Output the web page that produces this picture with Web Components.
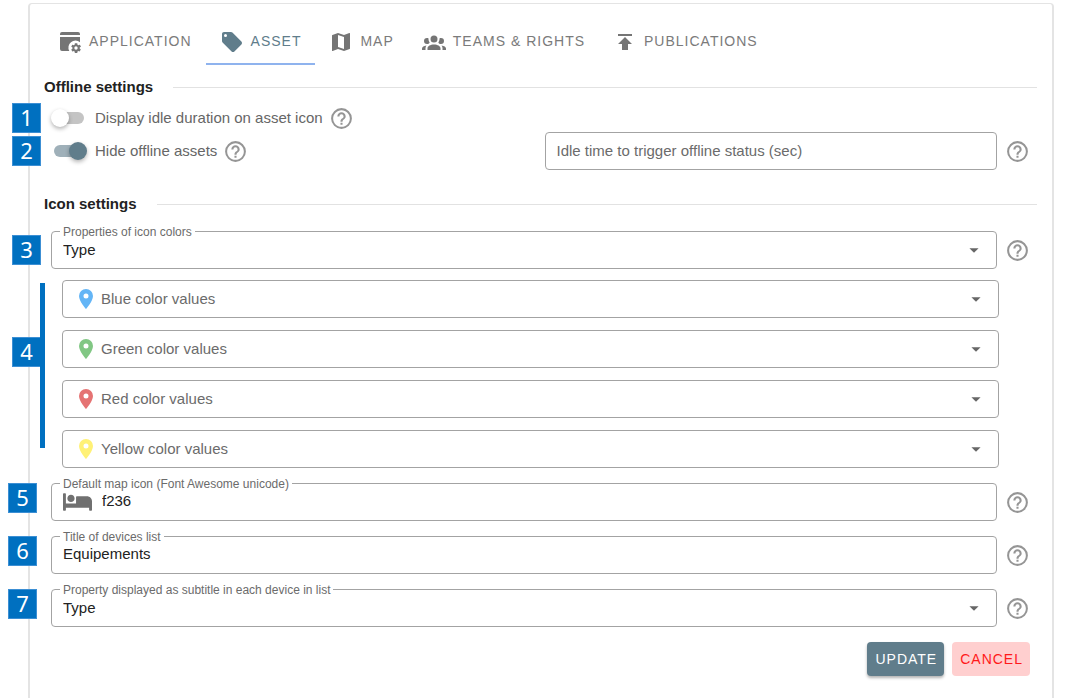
<!DOCTYPE html>
<html lang="en">
<head>
<meta charset="utf-8">
<meta name="viewport" content="width=device-width, initial-scale=1">
<title>Offline settings</title>
<style>
    body { margin: 0; background: #fff; font-family: "Liberation Sans", Arial, sans-serif; font-size: 15px; line-height: 20px; color: #222; }
</style>
</head>
<body>

<settings-card>
    <tab-bar>
        <tab-item icon="application">APPLICATION</tab-item>
        <tab-item icon="tag" selected>ASSET</tab-item>
        <tab-item icon="map">MAP</tab-item>
        <tab-item icon="teams">TEAMS &amp; RIGHTS</tab-item>
        <tab-item icon="publish">PUBLICATIONS</tab-item>
    </tab-bar>

    <settings-section heading="Offline settings">
        <form-row>
            <step-marker slot="marker">1</step-marker>
            <toggle-switch label="Display idle duration on asset icon"></toggle-switch>
        </form-row>
        <form-row columns>
            <step-marker slot="marker">2</step-marker>
            <toggle-switch label="Hide offline assets" checked></toggle-switch>
            <field-line>
                <outlined-field label="Idle time to trigger offline status (sec)"></outlined-field>
            </field-line>
        </form-row>
    </settings-section>

    <settings-section heading="Icon settings" spaced>
        <form-row>
            <step-marker slot="marker">3</step-marker>
            <field-line>
                <outlined-field type="select" label="Properties of icon colors" value="Type"></outlined-field>
            </field-line>
        </form-row>
        <color-group>
            <step-marker slot="marker">4</step-marker>
            <outlined-field type="select" label="Blue color values" icon="pin" style="--icon-color: #64b5f6"></outlined-field>
            <outlined-field type="select" label="Green color values" icon="pin" style="--icon-color: #81c784"></outlined-field>
            <outlined-field type="select" label="Red color values" icon="pin" style="--icon-color: #e57373"></outlined-field>
            <outlined-field type="select" label="Yellow color values" icon="pin" style="--icon-color: #fff176"></outlined-field>
        </color-group>
        <form-row stacked>
            <step-marker slot="marker" outer>5</step-marker>
            <field-line>
                <outlined-field label="Default map icon (Font Awesome unicode)" value="f236" icon="bed"></outlined-field>
            </field-line>
        </form-row>
        <form-row stacked>
            <step-marker slot="marker" outer>6</step-marker>
            <field-line>
                <outlined-field label="Title of devices list" value="Equipements"></outlined-field>
            </field-line>
        </form-row>
        <form-row stacked>
            <step-marker slot="marker" outer>7</step-marker>
            <field-line>
                <outlined-field type="select" label="Property displayed as subtitle in each device in list" value="Type"></outlined-field>
            </field-line>
        </form-row>
    </settings-section>

    <action-button slot="actions" primary>UPDATE</action-button>
    <action-button slot="actions">CANCEL</action-button>
</settings-card>

<script>
const ICONS = {
    application: ['0 0 24 24', 'M4 2H20A2 2 0 0 1 22 4V5H2V4A2 2 0 0 1 4 2ZM2 7H22V12.3A7 7 0 0 0 11.3 21H4A2 2 0 0 1 2 19V7ZM21.7 18.6V17.6L22.8 16.8C22.9 16.7 23 16.6 22.9 16.5L21.9 14.8C21.9 14.7 21.7 14.7 21.6 14.7L20.4 15.2C20.1 15 19.8 14.8 19.5 14.7L19.3 13.4C19.3 13.3 19.2 13.2 19.1 13.2H17.1C16.9 13.2 16.8 13.3 16.8 13.4L16.6 14.7C16.3 14.9 16.1 15 15.8 15.2L14.6 14.7C14.5 14.7 14.4 14.7 14.3 14.8L13.3 16.5C13.3 16.6 13.3 16.7 13.4 16.8L14.5 17.6V18.6L13.4 19.4C13.3 19.5 13.2 19.6 13.3 19.7L14.3 21.4C14.4 21.5 14.5 21.5 14.6 21.5L15.8 21C16 21.2 16.3 21.4 16.6 21.5L16.8 22.8C16.9 22.9 17 23 17.1 23H19.1C19.2 23 19.3 22.9 19.3 22.8L19.5 21.5C19.8 21.3 20 21.2 20.3 21L21.5 21.4C21.6 21.4 21.7 21.4 21.8 21.3L22.8 19.6C22.9 19.5 22.9 19.4 22.8 19.4ZM18 19.7A1.7 1.7 0 1 1 18 16.3A1.7 1.7 0 1 1 18 19.7Z'],
    tag: ['0 0 24 24', 'M5.5 7A1.5 1.5 0 0 1 4 5.5A1.5 1.5 0 0 1 5.5 4A1.5 1.5 0 0 1 7 5.5A1.5 1.5 0 0 1 5.5 7M21.41 11.58L12.41 2.58C12.05 2.22 11.55 2 11 2H4C2.89 2 2 2.89 2 4V11C2 11.55 2.22 12.05 2.59 12.41L11.58 21.41C11.95 21.77 12.45 22 13 22S14.05 21.77 14.41 21.41L21.41 14.41C21.78 14.05 22 13.55 22 13C22 12.44 21.77 11.94 21.41 11.58Z'],
    map: ['0 0 24 24', 'M15 19L9 16.89V5L15 7.11M20.5 3C20.44 3 20.39 3 20.34 3L15 5.1L9 3L3.36 4.9C3.15 4.97 3 5.15 3 5.38V20.5A.5.5 0 0 0 3.5 21C3.55 21 3.61 21 3.66 20.97L9 18.9L15 21L20.64 19.1C20.85 19 21 18.85 21 18.62V3.5A.5.5 0 0 0 20.5 3Z'],
    teams: ['0 0 24 24', 'M12 5.5A3.5 3.5 0 0 1 15.5 9A3.5 3.5 0 0 1 12 12.5A3.5 3.5 0 0 1 8.5 9A3.5 3.5 0 0 1 12 5.5M5 8C5.56 8 6.08 8.15 6.53 8.42C6.38 9.85 6.8 11.27 7.66 12.38C7.16 13.34 6.16 14 5 14A3 3 0 0 1 2 11A3 3 0 0 1 5 8M19 8A3 3 0 0 1 22 11A3 3 0 0 1 19 14C17.84 14 16.84 13.34 16.34 12.38C17.2 11.27 17.62 9.85 17.47 8.42C17.92 8.15 18.44 8 19 8M5.5 18.25C5.5 16.18 8.41 14.5 12 14.5S18.5 16.18 18.5 18.25V20H5.5V18.25M0 20V18.5C0 17.11 1.89 15.94 4.45 15.6C3.86 16.28 3.5 17.22 3.5 18.25V20H0M24 20H20.5V18.25C20.5 17.22 20.14 16.28 19.55 15.6C22.11 15.94 24 17.11 24 18.5V20Z'],
    publish: ['0 0 24 24', 'M5 4V6H19V4H5M5 14H9V20H15V14H19L12 7L5 14Z'],
    pin: ['0 0 24 24', 'M12 11.5A2.5 2.5 0 0 1 9.5 9A2.5 2.5 0 0 1 12 6.5A2.5 2.5 0 0 1 14.5 9A2.5 2.5 0 0 1 12 11.5M12 2A7 7 0 0 0 5 9C5 14.25 12 22 12 22S19 14.25 19 9A7 7 0 0 0 12 2Z'],
    arrow: ['0 0 24 24', 'M7 10L12 15L17 10H7Z'],
    help: ['0 0 24 24', 'M11 18H13V16H11V18M12 2A10 10 0 0 0 2 12A10 10 0 0 0 12 22A10 10 0 0 0 22 12A10 10 0 0 0 12 2M12 20C7.59 20 4 16.41 4 12S7.59 4 12 4 20 7.59 20 12 16.41 20 12 20M12 6A4 4 0 0 0 8 10H10A2 2 0 0 1 12 8A2 2 0 0 1 14 10C14 12 11 11.75 11 15H13C13 12.75 16 12.5 16 10A4 4 0 0 0 12 6Z'],
    bed: ['0 0 640 512', 'M176 256c44.11 0 80-35.89 80-80s-35.89-80-80-80-80 35.89-80 80 35.89 80 80 80zm352-128H304c-8.84 0-16 7.16-16 16v144H64V80c0-8.84-7.16-16-16-16H16C7.16 64 0 71.16 0 80v352c0 8.84 7.16 16 16 16h32c8.84 0 16-7.16 16-16v-48h512v48c0 8.84 7.16 16 16 16h32c8.84 0 16-7.16 16-16V240c0-61.86-50.14-112-112-112z']
};

function icon(name, cls = '') {
    const [box, path] = ICONS[name];
    return `<svg class="${cls}" viewBox="${box}" aria-hidden="true"><path fill="currentColor" fill-rule="evenodd" d="${path}"/></svg>`;
}

class SettingsCard extends HTMLElement {
    constructor() {
        super();
        this.attachShadow({ mode: 'open' }).innerHTML = `
            <style>
                :host { display: block; box-sizing: border-box; min-height: calc(100vh - 3px); margin: 3px 13px 0 28px; padding: 15px 15px 20px 14px; border: solid #e4e4e4; border-width: 1px 2px 0; border-radius: 4px 4px 0 0; }
                footer { display: flex; justify-content: flex-end; gap: 8px; margin: 15px 7px 0; }
            </style>
            <slot></slot>
            <footer><slot name="actions"></slot></footer>
        `;
    }
}

class TabBar extends HTMLElement {
    constructor() {
        super();
        this.attachShadow({ mode: 'open' }).innerHTML = `
            <style>
                :host { display: block; }
                nav { display: flex; }
            </style>
            <nav><slot></slot></nav>
        `;
    }
}

class TabItem extends HTMLElement {
    constructor() {
        super();
        this.attachShadow({ mode: 'open' }).innerHTML = `
            <style>
                :host { display: block; }
                button { display: flex; align-items: center; gap: 7px; box-sizing: border-box; height: 46px; padding: 0 14px; border: 0; border-bottom: 2px solid transparent; background: none; font: 14px/20px "Liberation Sans", Arial, sans-serif; letter-spacing: 1px; color: #7b7b7b; white-space: nowrap; cursor: pointer; }
                svg { width: 24px; height: 24px; margin-top: 2px; color: #757575; }
                :host([selected]) button { color: #607d8b; border-color: #8fb3ee; }
                :host([selected]) svg { color: #607d8b; }
            </style>
            <button type="button">${icon(this.getAttribute('icon'))}<slot></slot></button>
        `;
    }
}

class SettingsSection extends HTMLElement {
    constructor() {
        super();
        this.attachShadow({ mode: 'open' }).innerHTML = `
            <style>
                :host { display: block; margin-top: 10px; }
                header { display: flex; align-items: center; gap: 20px; height: 24px; margin-bottom: 5px; }
                h2 { margin: 0; font-size: 15px; line-height: 20px; }
                hr { flex: 1; margin: 0; border: 0; border-top: 1px solid #e2e2e2; }
                :host([spaced]) { margin-top: 22px; }
                :host([spaced]) header { margin-bottom: 15px; }
            </style>
            <header><h2>${this.getAttribute('heading')}</h2><hr></header>
            <slot></slot>
        `;
    }
}

class FormRow extends HTMLElement {
    constructor() {
        super();
        this.attachShadow({ mode: 'open' }).innerHTML = `
            <style>
                :host { display: block; position: relative; padding: 0 7px; }
                .cells { display: grid; grid-template-columns: minmax(0, 1fr); column-gap: 8px; align-items: center; min-height: 28px; }
                :host([columns]) .cells { grid-template-columns: repeat(2, minmax(0, 1fr)); }
                :host([stacked]) { margin-top: 15px; }
            </style>
            <slot name="marker"></slot>
            <div class="cells"><slot></slot></div>
        `;
    }
}

class ColorGroup extends HTMLElement {
    constructor() {
        super();
        this.attachShadow({ mode: 'open' }).innerHTML = `
            <style>
                :host { display: block; position: relative; margin-top: 11px; }
                .fields { display: grid; gap: 12px; margin: 0 38px 0 18px; }
                .bracket { position: absolute; left: -4px; top: 3px; bottom: 20px; width: 5px; background: #0070c0; }
                .marker { position: absolute; left: 0; top: 0; bottom: 44px; }
            </style>
            <div class="marker"><slot name="marker"></slot></div>
            <div class="bracket"></div>
            <div class="fields"><slot></slot></div>
        `;
    }
}

// Numbered callout that hangs over the left edge of the card
class StepMarker extends HTMLElement {
    constructor() {
        super();
        this.attachShadow({ mode: 'open' }).innerHTML = `
            <style>
                :host { position: absolute; left: -32px; top: 0; bottom: 0; display: flex; align-items: center; }
                :host([outer]) { left: -36px; align-items: flex-start; }
                span { box-sizing: border-box; width: 29px; height: 30px; border: 1px solid #3c8fd4; background: #0070c0; color: #fff; font: 22px/26px "Noto Sans", "Open Sans", sans-serif; text-align: center; }
            </style>
            <span><slot></slot></span>
        `;
    }
}

class HelpButton extends HTMLElement {
    constructor() {
        super();
        this.attachShadow({ mode: 'open' }).innerHTML = `
            <style>
                :host { display: block; }
                button { display: block; padding: 0; border: 0; background: none; color: #959595; cursor: pointer; }
                svg { display: block; width: 25px; height: 25px; }
            </style>
            <button type="button" aria-label="?">${icon('help')}</button>
        `;
    }
}

class ToggleSwitch extends HTMLElement {
    constructor() {
        super();
        this.attachShadow({ mode: 'open' }).innerHTML = `
            <style>
                :host { display: flex; align-items: center; gap: 6px; color: #666; }
                label { display: flex; align-items: center; gap: 8px; cursor: pointer; }
                input { appearance: none; display: grid; align-items: center; width: 36px; height: 18px; margin: 0; cursor: pointer; }
                input::before, input::after { content: ""; grid-area: 1 / 1; }
                input::before { height: 12px; margin: 0 3px; border-radius: 6px; background: #c4c4c4; }
                input::after { width: 18px; height: 18px; border-radius: 50%; background: #fff; box-shadow: 0 2px 4px rgba(0, 0, 0, .3); }
                input:checked::before { background: #9fb0b9; }
                input:checked::after { justify-self: end; background: #607d8b; }
            </style>
            <label><input type="checkbox" ${this.hasAttribute('checked') ? 'checked' : ''}>${this.getAttribute('label')}</label>
            <help-button></help-button>
        `;
    }
}

class FieldLine extends HTMLElement {
    constructor() {
        super();
        this.attachShadow({ mode: 'open' }).innerHTML = `
            <style>
                :host { display: flex; align-items: center; gap: 8px; }
                ::slotted(*) { flex: 1; }
            </style>
            <slot></slot>
            <help-button></help-button>
        `;
    }
}

class OutlinedField extends HTMLElement {
    constructor() {
        super();
        const value = this.getAttribute('value') || '';
        const name = this.getAttribute('icon');
        const isSelect = this.getAttribute('type') === 'select';
        const control = isSelect
            ? `<select id="control"><option>${value}</option></select>${icon('arrow', 'arrow')}`
            : `<input id="control" type="text" value="${value}">`;
        this.attachShadow({ mode: 'open' }).innerHTML = `
            <style>
                :host { display: block; min-width: 0; }
                .box { position: relative; display: flex; align-items: center; box-sizing: border-box; height: 38px; padding: 0 11px; border: 1px solid #a3a3a3; border-radius: 4px; }
                .value { display: grid; flex: 1; align-items: center; min-width: 0; }
                input, select { grid-area: 1 / 1; box-sizing: border-box; appearance: none; width: 100%; height: 36px; margin: 0; padding: 0; border: 0; outline: 0; background: none; font: inherit; color: #222; }
                input { padding-bottom: 3px; }
                label { color: #6b6b6b; }
                .value label { grid-area: 1 / 1; pointer-events: none; }
                .float { position: absolute; top: -7px; left: 8px; padding: 0 3px; background: #fff; font-size: 12px; line-height: 14px; }
                .arrow { grid-area: 1 / 1; justify-self: end; width: 22px; height: 22px; color: #666; pointer-events: none; }
                .pin { width: 24px; height: 24px; margin-right: 3px; color: var(--icon-color); }
                .bed { width: 29px; height: 24px; margin-right: 10px; color: #707070; }
            </style>
            <div class="box">
                ${name ? icon(name, name) : ''}
                ${value ? `<label class="float" for="control">${this.getAttribute('label')}</label>` : ''}
                <div class="value">
                    ${control}
                    ${value ? '' : `<label for="control">${this.getAttribute('label')}</label>`}
                </div>
            </div>
        `;
    }
}

class ActionButton extends HTMLElement {
    constructor() {
        super();
        this.attachShadow({ mode: 'open' }).innerHTML = `
            <style>
                :host { display: block; }
                button { height: 34px; padding: 0 7px 0 8px; border: 0; border-radius: 4px; background: #ffcfcf; color: #ff1a1a; font: 14px/20px "Liberation Sans", Arial, sans-serif; letter-spacing: 1px; cursor: pointer; }
                :host([primary]) button { background: #607d8b; color: #fff; box-shadow: 0 2px 3px rgba(0, 0, 0, .3); }
            </style>
            <button type="button"><slot></slot></button>
        `;
    }
}

customElements.define('settings-card', SettingsCard);
customElements.define('tab-bar', TabBar);
customElements.define('tab-item', TabItem);
customElements.define('settings-section', SettingsSection);
customElements.define('form-row', FormRow);
customElements.define('color-group', ColorGroup);
customElements.define('step-marker', StepMarker);
customElements.define('help-button', HelpButton);
customElements.define('toggle-switch', ToggleSwitch);
customElements.define('field-line', FieldLine);
customElements.define('outlined-field', OutlinedField);
customElements.define('action-button', ActionButton);
</script>
</body>
</html>
